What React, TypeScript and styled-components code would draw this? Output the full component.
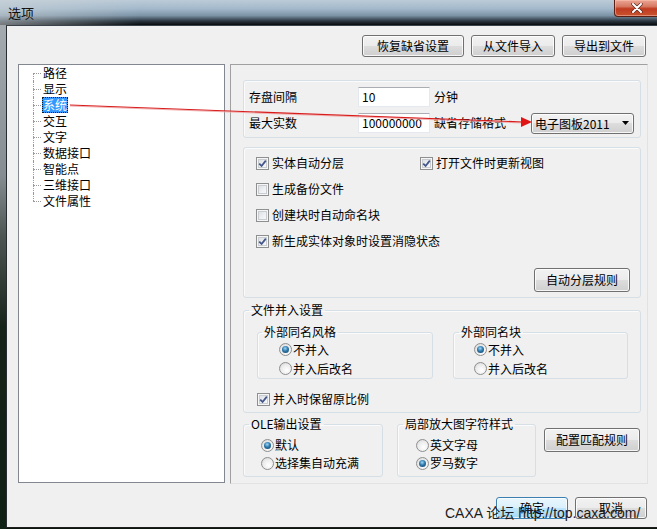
import React from "react";
import styled, { createGlobalStyle, css } from "styled-components";

const FONT = `"Noto Sans CJK SC", "Noto Sans", sans-serif`;

const GlobalStyle = createGlobalStyle`
  html, body { margin: 0; padding: 0; background: #0e1a12; }
  body { font-family: ${FONT}; font-size: 12px; color: #000; }
  * { box-sizing: border-box; }
`;

const Window = styled.div`
  position: relative;
  width: 657px;
  height: 529px;
  overflow: hidden;
  display: flex;
  flex-direction: column;
  background: #0d150f;
`;

const TitleBar = styled.div`
  height: 25px;
  flex: none;
  display: flex;
  align-items: flex-start;
  justify-content: space-between;
  background:
    linear-gradient(to right, rgba(205, 212, 216, 0.55) 0px, rgba(205, 212, 216, 0) 140px),
    linear-gradient(to bottom, #bccbd7 0%, #a3b9cb 35%, #7d94a7 62%, #2a3640 84%, #080b0d 100%);
`;

const Title = styled.span`
  padding-left: 8px;
  font-size: 13px;
  line-height: 25px;
  color: #111;
`;

const CloseButton = styled.div`
  width: 46px;
  height: 17px;
  margin-right: -3px;
  border: 1px solid #5a1e12;
  border-top: none;
  border-radius: 0 0 4px 4px;
  background: linear-gradient(#eba695 0%, #d77a63 40%, #bf3b20 55%, #c9532f 100%);
  box-shadow: inset 0 0 0 1px rgba(255, 200, 180, 0.5);
  display: flex;
  align-items: center;
  justify-content: center;
`;

const Frame = styled.div`
  flex: 1;
  display: flex;
  min-height: 0;
`;

const LeftEdge = styled.div`
  width: 6px;
  flex: none;
  background: linear-gradient(to bottom, #a3abb0 0%, #858d92 30%, #4d5552 42%, #16231a 60%, #0f2014 100%);
`;

const Client = styled.div`
  flex: 1;
  display: flex;
  flex-direction: column;
  margin-bottom: 1px;
  background: #f0f0f0;
  border-left: 1px solid #272d31;
  border-top: 1px solid #3b434a;
  border-bottom: 1px solid #1e1e1e;
`;

const Toolbar = styled.div`
  display: flex;
  justify-content: flex-end;
  gap: 7px;
  padding: 9px 11px 0 0;
`;

const Btn = styled.button<{ $w: number; $h?: number; $default?: boolean }>`
  flex: none;
  width: ${(p) => p.$w}px;
  height: ${(p) => p.$h ?? 22}px;
  padding: 0;
  font-family: ${FONT};
  font-size: 12px;
  line-height: 1;
  color: #000;
  border-radius: 3px;
  display: flex;
  align-items: center;
  justify-content: center;
  ${(p) =>
    p.$default
      ? css`
          border: 1px solid #3c7fb1;
          background: linear-gradient(#eaf6fd 0%, #d9f0fc 50%, #bee6fd 50%, #a7d9f5 100%);
          box-shadow: inset 0 0 0 1px rgba(255, 255, 255, 0.7);
        `
      : css`
          border: 1px solid #707070;
          background: linear-gradient(#f2f2f2 0%, #ebebeb 50%, #dddddd 50%, #cfcfcf 100%);
          box-shadow: inset 0 0 0 1px rgba(255, 255, 255, 0.8);
        `}
`;

const MainRow = styled.div`
  display: flex;
  align-items: flex-start;
  gap: 5px;
  height: 420px;
  margin-top: 7px;
  padding: 0 9px 0 11px;
`;

const Tree = styled.div`
  flex: none;
  width: 207px;
  height: 419px;
  background: #fff;
  border: 1px solid #828790;
  padding-left: 23px;
`;

const TreeItem = styled.div<{ $first?: boolean; $last?: boolean }>`
  position: relative;
  height: 16px;
  line-height: 16px;
  &::before {
    content: "";
    position: absolute;
    left: -9px;
    top: 8px;
    width: 8px;
    border-top: 1px dotted #9a9a9a;
  }
  &::after {
    content: "";
    position: absolute;
    left: -9px;
    top: ${(p) => (p.$first ? "8px" : "0")};
    bottom: ${(p) => (p.$last ? "8px" : "0")};
    border-left: 1px dotted #9a9a9a;
  }
`;

const TreeLabel = styled.span<{ $selected?: boolean }>`
  display: inline-block;
  height: 16px;
  padding: 0 1px;
  font-size: 12px;
  ${(p) =>
    p.$selected &&
    css`
      background: #3399ff;
      color: #fff;
      outline: 1px dotted #1a1a1a;
      outline-offset: -1px;
    `}
`;

const Panel = styled.div`
  flex: none;
  width: 418px;
  height: 420px;
  display: flex;
  flex-direction: column;
  padding: 15px 6px 4px 12px;
  border: 1px solid;
  border-color: #a0a0a0 #e2e2e2 #e2e2e2 #a0a0a0;
`;

const Group = styled.div<{ $h: number; $mt?: number }>`
  flex: none;
  height: ${(p) => p.$h}px;
  margin-top: ${(p) => p.$mt ?? 0}px;
  border: 1px solid #d5dfe5;
  border-radius: 3px;
  box-shadow: inset 1px 1px 0 #fbfbfb;
`;

const FieldGroup = styled.div`
  padding: 6px 0 0 5px;
  display: flex;
  flex-direction: column;
  gap: 6px;
`;

const FieldRow = styled.div`
  display: flex;
  align-items: center;
  height: 20px;
`;

const FieldLabel = styled.span`
  width: 109px;
  flex: none;
  line-height: 20px;
`;

const TextInput = styled.div`
  width: 72px;
  height: 20px;
  flex: none;
  background: #fff;
  border: 1px solid #e3e9ef;
  border-top-color: #abadb3;
  padding-left: 3px;
  line-height: 18px;
  font-size: 12px;
`;

const Unit = styled.span`
  margin-left: 4px;
  line-height: 20px;
`;

const Select = styled.div`
  margin-left: auto;
  margin-right: 6px;
  width: 103px;
  height: 21px;
  flex: none;
  display: flex;
  align-items: center;
  justify-content: space-between;
  padding: 0 4px 0 3px;
  border: 1px solid #707070;
  border-radius: 3px;
  background: linear-gradient(#f2f2f2 0%, #ebebeb 50%, #dddddd 50%, #cfcfcf 100%);
  box-shadow: inset 0 0 0 1px rgba(255, 255, 255, 0.8);
  font-size: 12px;
`;

const CheckBody = styled.div`
  padding: 2px 10px 0 12px;
  display: flex;
  flex-direction: column;
`;

const CheckRow = styled.div`
  height: 26px;
  display: flex;
  align-items: center;
`;

const Option = styled.label<{ $w?: number; $gap?: number }>`
  display: flex;
  align-items: center;
  gap: ${(p) => p.$gap ?? 3}px;
  width: ${(p) => (p.$w ? `${p.$w}px` : "auto")};
  flex: none;
  line-height: 16px;
  white-space: nowrap;
`;

const Box = styled.span`
  width: 13px;
  height: 13px;
  flex: none;
  border: 1px solid #8e8f8f;
  background: linear-gradient(135deg, #d6d9de 0%, #eef0f2 55%, #fcfcfc 100%);
  box-shadow: inset 0 0 0 1px #f6f6f6, inset 0 0 0 2px #c9ccd1;
  display: flex;
  align-items: center;
  justify-content: center;
`;

const Radio = styled.span<{ $on?: boolean }>`
  width: 13px;
  height: 13px;
  flex: none;
  border-radius: 50%;
  border: 1px solid #8e8f8f;
  background: radial-gradient(circle at 60% 65%, #ffffff 0%, #ececec 55%, #cdcdcd 100%);
  display: flex;
  align-items: center;
  justify-content: center;
  &::after {
    content: "";
    display: ${(p) => (p.$on ? "block" : "none")};
    width: 7px;
    height: 7px;
    border-radius: 50%;
    background: radial-gradient(circle at 45% 35%, #9fd8f7 0%, #2f79ab 45%, #0c3a60 100%);
  }
`;

const ButtonRow = styled.div`
  display: flex;
  justify-content: flex-end;
  margin-top: 14px;
`;

const Fieldset = styled.fieldset<{ $w?: number; $mt?: number }>`
  flex: none;
  margin: ${(p) => p.$mt ?? 0}px 0 0 0;
  padding: 0;
  min-width: 0;
  width: ${(p) => (p.$w ? `${p.$w}px` : "auto")};
  border: 1px solid #d5dfe5;
  border-radius: 3px;
  box-shadow: inset 1px 1px 0 #fbfbfb;
`;

const Legend = styled.legend<{ $ml: number }>`
  margin-left: ${(p) => p.$ml}px;
  padding: 0 2px;
  font-size: 12px;
  line-height: 14px;
`;

const MergeBody = styled.div`
  padding: 8px 0 3px 13px;
  display: flex;
  flex-direction: column;
`;

const InnerRow = styled.div`
  display: flex;
  gap: 20px;
`;

const RadioList = styled.div<{ $pl: number; $row: number; $pt?: number; $pb?: number }>`
  display: flex;
  flex-direction: column;
  padding: ${(p) => p.$pt ?? 0}px 0 ${(p) => p.$pb ?? 0}px ${(p) => p.$pl}px;
  & > * {
    height: ${(p) => p.$row}px;
  }
`;

const KeepRow = styled.div`
  height: 20px;
  margin-top: 10px;
  display: flex;
  align-items: center;
`;

const BottomGroups = styled.div`
  display: flex;
  align-items: flex-start;
  margin-top: 4px;
`;

const FooterRow = styled.div`
  display: flex;
  justify-content: flex-end;
  gap: 7px;
  margin-top: 13px;
  padding-right: 10px;
`;

const Overlay = styled.svg`
  position: absolute;
  left: 0;
  top: 0;
  pointer-events: none;
  z-index: 10;
`;

const Watermark = styled.div`
  position: absolute;
  left: 445px;
  top: 505px;
  z-index: 11;
  font-family: "Liberation Sans", "Noto Sans CJK SC", sans-serif;
  font-size: 14px;
  line-height: 16px;
  color: #1c1c1c;
  white-space: nowrap;
  pointer-events: none;
`;

const CheckMark = () => (
  <svg width="9" height="9" viewBox="0 0 9 9">
    <path d="M1.2 4.6 L3.6 7 L7.8 1.6" fill="none" stroke="#44578a" strokeWidth="1.8" />
  </svg>
);

const CheckBox = ({ checked, label, w }: { checked?: boolean; label: string; w?: number }) => (
  <Option $w={w}>
    <Box>{checked && <CheckMark />}</Box>
    <span>{label}</span>
  </Option>
);

const RadioOpt = ({ on, label }: { on?: boolean; label: string }) => (
  <Option $gap={1}>
    <Radio $on={on} />
    <span>{label}</span>
  </Option>
);

const treeItems = ["路径", "显示", "系统", "交互", "文字", "数据接口", "智能点", "三维接口", "文件属性"];

export default function App() {
  return (
    <>
      <GlobalStyle />
      <Window>
        <TitleBar>
          <Title>选项</Title>
          <CloseButton>
            <svg width="12" height="10" viewBox="0 0 12 10">
              <path d="M2 1 L10 9 M10 1 L2 9" stroke="#5a2a20" strokeWidth="3.4" strokeLinecap="round" />
              <path d="M2 1 L10 9 M10 1 L2 9" stroke="#ffffff" strokeWidth="2" strokeLinecap="round" />
            </svg>
          </CloseButton>
        </TitleBar>
        <Frame>
          <LeftEdge />
          <Client>
            <Toolbar>
              <Btn $w={102}>恢复缺省设置</Btn>
              <Btn $w={84}>从文件导入</Btn>
              <Btn $w={84}>导出到文件</Btn>
            </Toolbar>
            <MainRow>
              <Tree>
                {treeItems.map((t, i) => (
                  <TreeItem key={t} $first={i === 0} $last={i === treeItems.length - 1}>
                    <TreeLabel $selected={t === "系统"}>{t}</TreeLabel>
                  </TreeItem>
                ))}
              </Tree>
              <Panel>
                <Group $h={58}>
                  <FieldGroup>
                    <FieldRow>
                      <FieldLabel>存盘间隔</FieldLabel>
                      <TextInput>10</TextInput>
                      <Unit>分钟</Unit>
                    </FieldRow>
                    <FieldRow>
                      <FieldLabel>最大实数</FieldLabel>
                      <TextInput>100000000</TextInput>
                      <Unit>缺省存储格式</Unit>
                      <Select>
                        <span>电子图板2011</span>
                        <svg width="7" height="4" viewBox="0 0 7 4">
                          <path d="M0 0 H7 L3.5 4 Z" fill="#000" />
                        </svg>
                      </Select>
                    </FieldRow>
                  </FieldGroup>
                </Group>
                <Group $h={151} $mt={9}>
                  <CheckBody>
                    <CheckRow>
                      <CheckBox checked label="实体自动分层" w={164} />
                      <CheckBox checked label="打开文件时更新视图" />
                    </CheckRow>
                    <CheckRow>
                      <CheckBox label="生成备份文件" />
                    </CheckRow>
                    <CheckRow>
                      <CheckBox label="创建块时自动命名块" />
                    </CheckRow>
                    <CheckRow>
                      <CheckBox checked label="新生成实体对象时设置消隐状态" />
                    </CheckRow>
                    <ButtonRow>
                      <Btn $w={96} $h={24}>自动分层规则</Btn>
                    </ButtonRow>
                  </CheckBody>
                </Group>
                <Fieldset $mt={5}>
                  <Legend $ml={5}>文件并入设置</Legend>
                  <MergeBody>
                    <InnerRow>
                      <Fieldset $w={176}>
                        <Legend $ml={4}>外部同名风格</Legend>
                        <RadioList $pl={21} $row={19} $pt={1}>
                          <RadioOpt on label="不并入" />
                          <RadioOpt label="并入后改名" />
                        </RadioList>
                      </Fieldset>
                      <Fieldset $w={175}>
                        <Legend $ml={5}>外部同名块</Legend>
                        <RadioList $pl={20} $row={19} $pt={1}>
                          <RadioOpt on label="不并入" />
                          <RadioOpt label="并入后改名" />
                        </RadioList>
                      </Fieldset>
                    </InnerRow>
                    <KeepRow>
                      <CheckBox checked label="并入时保留原比例" />
                    </KeepRow>
                  </MergeBody>
                </Fieldset>
                <BottomGroups>
                  <Fieldset $w={140}>
                    <Legend $ml={5}>OLE输出设置</Legend>
                    <RadioList $pl={17} $row={18} $pt={5} $pb={4}>
                      <RadioOpt on label="默认" />
                      <RadioOpt label="选择集自动充满" />
                    </RadioList>
                  </Fieldset>
                  <Fieldset $w={139} style={{ marginLeft: 14 }}>
                    <Legend $ml={5}>局部放大图字符样式</Legend>
                    <RadioList $pl={18} $row={18} $pt={5} $pb={4}>
                      <RadioOpt label="英文字母" />
                      <RadioOpt on label="罗马数字" />
                    </RadioList>
                  </Fieldset>
                  <Btn $w={96} $h={24} style={{ marginLeft: 8, marginTop: 11 }}>
                    配置匹配规则
                  </Btn>
                </BottomGroups>
              </Panel>
            </MainRow>
            <FooterRow>
              <Btn $w={72} $default>
                确定
              </Btn>
              <Btn $w={72}>取消</Btn>
            </FooterRow>
          </Client>
        </Frame>
        <Overlay width="657" height="529" viewBox="0 0 657 529">
          <line x1="70" y1="106" x2="523" y2="123" stroke="#f2b0b0" strokeWidth="1.2" />
          <line x1="70" y1="105" x2="523" y2="122" stroke="#d81c1c" strokeWidth="1.2" />
          <polygon points="521,117 532,122 521,127" fill="#e01414" />
        </Overlay>
        <Watermark>CAXA 论坛 http://top.caxa.com/</Watermark>
      </Window>
    </>
  );
}
